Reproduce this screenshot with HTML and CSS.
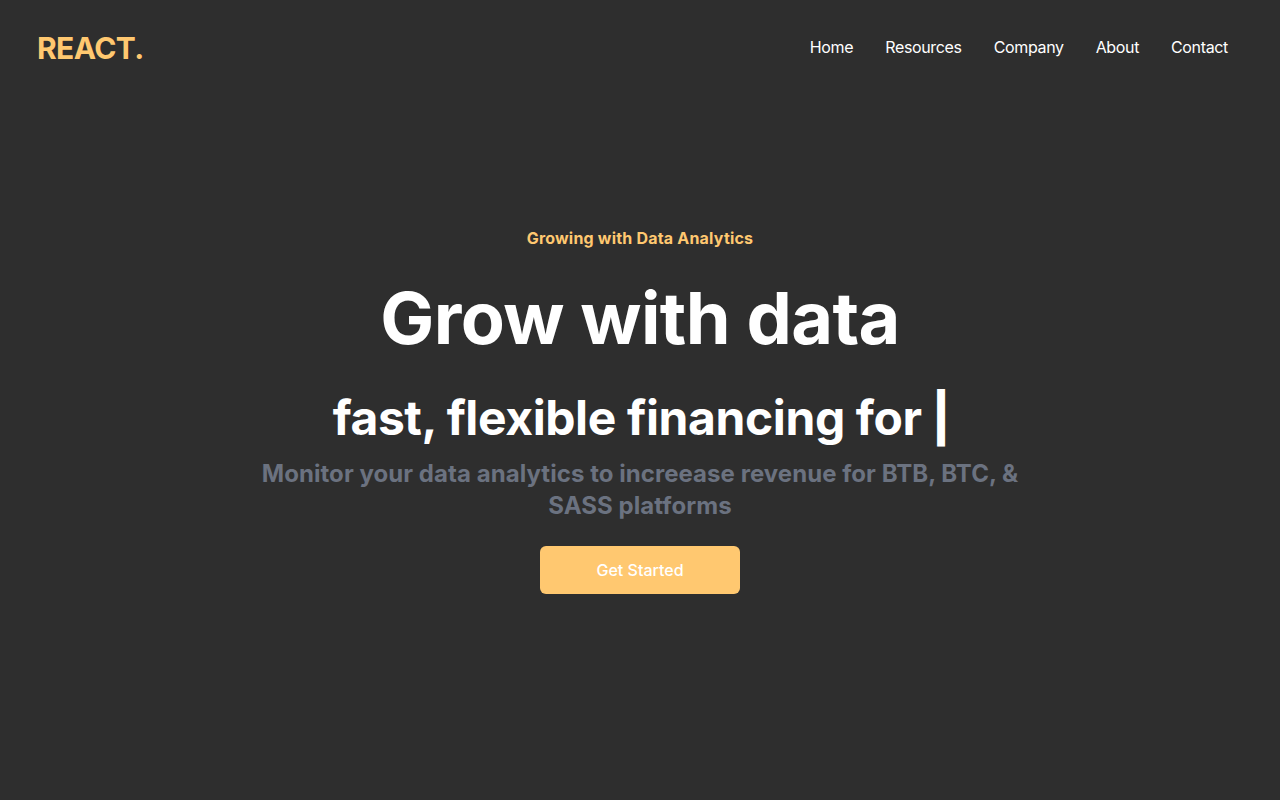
FILE: index.html
```html
<!DOCTYPE html>
<html lang="en">
<head>
<meta charset="utf-8">
<title>REACT.</title>
<link rel="stylesheet" href="styles.css">
</head>
<body>
<header class="navbar">
  <h1 class="logo">REACT.</h1>
  <ul class="nav-links">
    <li>Home</li>
    <li>Resources</li>
    <li>Company</li>
    <li>About</li>
    <li>Contact</li>
  </ul>
</header>
<main class="hero">
  <p class="eyebrow">Growing with Data Analytics</p>
  <h2 class="title">Grow with data</h2>
  <div class="typed-row">
    <p class="typed-text">fast, flexible financing for</p>
    <span class="typed-cursor">|</span>
  </div>
  <p class="subtitle">Monitor your data analytics to increease revenue for BTB, BTC, &amp; SASS platforms</p>
  <button class="cta">Get Started</button>
</main>
</body>
</html>
```

FILE: styles.css
```css
* {
  box-sizing: border-box;
  margin: 0;
  padding: 0;
}

html, body {
  height: 100%;
}

body {
  background: #2e2e2e;
  color: #ffffff;
  font-family: Inter, "Noto Sans", sans-serif;
}

.navbar {
  max-width: 1240px;
  height: 96px;
  margin: 0 auto;
  padding: 0 16px;
  display: flex;
  align-items: center;
  justify-content: space-between;
}

.logo {
  font-size: 30px;
  line-height: 36px;
  font-weight: 700;
  letter-spacing: -0.6px;
  color: #ffc870;
  padding-left: 1px;
}

.nav-links {
  list-style: none;
  display: flex;
  margin-top: -2px;
}

.nav-links li {
  padding: 16px;
  font-size: 16px;
  line-height: 24px;
  letter-spacing: -0.35px;
  color: #ffffff;
}

.hero {
  max-width: 800px;
  margin: 0 auto;
  padding-top: 122px;
  text-align: center;
  display: flex;
  flex-direction: column;
}

.eyebrow {
  color: #ffc870;
  font-weight: 700;
  font-size: 16px;
  line-height: 24px;
  letter-spacing: 0.2px;
  padding: 8px;
}

.title {
  font-size: 72px;
  line-height: 72px;
  font-weight: 700;
  letter-spacing: -0.6px;
  padding: 24px 0;
}

.typed-row {
  display: flex;
  justify-content: center;
  align-items: center;
  padding-left: 3px;
}

.typed-text {
  font-size: 48px;
  line-height: 48px;
  font-weight: 700;
  letter-spacing: -0.4px;
  padding: 16px 0;
}

.typed-cursor {
  font-size: 48px;
  line-height: 48px;
  font-weight: 800;
  padding-left: 10px;
}

.subtitle {
  font-size: 24px;
  line-height: 32px;
  font-weight: 700;
  letter-spacing: 0.05px;
  color: #6b7280;
}

.cta {
  width: 200px;
  margin: 24px auto;
  padding: 12px 0;
  border: none;
  border-radius: 6px;
  background: #ffc870;
  color: #ffffff;
  font-family: Inter, "Noto Sans", sans-serif;
  font-size: 16px;
  line-height: 24px;
  font-weight: 500;
}
```
